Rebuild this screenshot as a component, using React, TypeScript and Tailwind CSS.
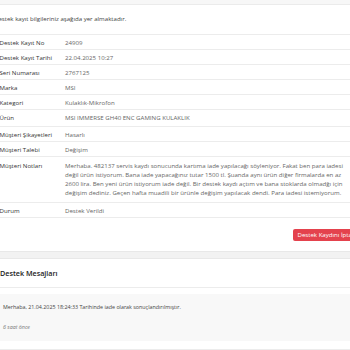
import React from "react";

type Row = { label: string; value: React.ReactNode; pad?: string };

const rows: Row[] = [
  { label: "Destek Kayıt No", value: "24909" },
  { label: "Destek Kayıt Tarihi", value: "22.04.2025 10:27" },
  { label: "Seri Numarası", value: "2767125" },
  { label: "Marka", value: "MSI" },
  { label: "Kategori", value: "Kulaklık-Mikrofon" },
  { label: "Ürün", value: "MSI IMMERSE GH40 ENC GAMING KULAKLIK", pad: "pt-[3px] pb-[4px]" },
  { label: "Müşteri Şikayetleri", value: "Hasarlı" },
  { label: "Müşteri Talebi", value: "Değişim" },
  {
    label: "Müşteri Notları",
    pad: "pt-[3.5px] pb-[5px]",
    value: (
      <>
        Merhaba. 482137 servis kaydı sonucunda kartıma iade yapılacağı söyleniyor. Fakat ben para iadesi
        <br />
        değil ürün istiyorum. Bana iade yapacağınız tutar 1500 tl. Şuanda aynı ürün diğer firmalarda en az
        <br />
        2600 lira. Ben yeni ürün istiyorum iade değil. Bir destek kaydı açtım ve bana stoklarda olmadğı için
        <br />
        değişim dediniz. Geçen hafta muadili bir ürünle değişim yapılacak dendi. Para iadesi istemiyorum.
      </>
    ),
  },
  { label: "Durum", value: "Destek Verildi" },
];

export default function App() {
  return (
    <div className="w-[350px] h-[350px] overflow-hidden bg-white font-['Open_Sans',sans-serif] text-[6.1px]">
      <div className="-ml-[6px] w-[400px]">
        {/* top card header edge */}
        <div className="h-[5px] bg-[#f7f7f7] border-b border-[#ebebeb]" />

        <p className="mt-[9px] leading-[9px] text-[#444]">
          Destek kayıt bilgileriniz aşağıda yer almaktadır.
        </p>

        {/* details table */}
        <div className="mt-[11px] border-b border-[#ececec]">
          {rows.map((r) => (
            <div
              key={r.label}
              className="grid grid-cols-[65.5px_1fr] border-t border-[#ececec] leading-[9px]"
            >
              <div className={`px-[5.5px] text-[#333] whitespace-nowrap ${r.pad ?? "pt-[3px] pb-[2px]"}`}>
                {r.label}
              </div>
              <div className={`px-[5.5px] text-[#666] whitespace-nowrap ${r.pad ?? "pt-[3px] pb-[2px]"}`}>
                {r.value}
              </div>
            </div>
          ))}
        </div>

        {/* cancel button */}
        <div className="mt-[11px] pl-[298.5px]">
          <button
            type="button"
            className="h-[12px] rounded-[2px] bg-[#e4424d] px-[5px] leading-[12px] text-white whitespace-nowrap"
          >
            Destek Kaydını İptal Et
          </button>
        </div>

        {/* spacing between cards */}
        <div className="mt-[10px] h-[8px] bg-[#f2f2f2] border-y border-[#e8e8e8]" />

        {/* messages card */}
        <div className="border-b border-[#ececec] py-[10px] pl-[6px] text-[7.2px] font-semibold leading-[8px] text-[#222]">
          Destek Mesajları
        </div>
        <div className="pt-[6px] pl-[6px]">
          <div className="bg-[#f8f8f8] pt-[10px] pb-[10px] pl-[3px] text-[5.35px] text-[#444]">
            <p className="leading-[7px]">
              Merhaba, 21.04.2025 18:24:33 Tarihinde iade olarak sonuçlandırılmıştır.
            </p>
            <p className="mt-[13px] leading-[7px] italic text-[#777]">6 saat önce</p>
          </div>
        </div>
        <div className="mt-[8px] border-t border-[#ececec]" />
      </div>
    </div>
  );
}
